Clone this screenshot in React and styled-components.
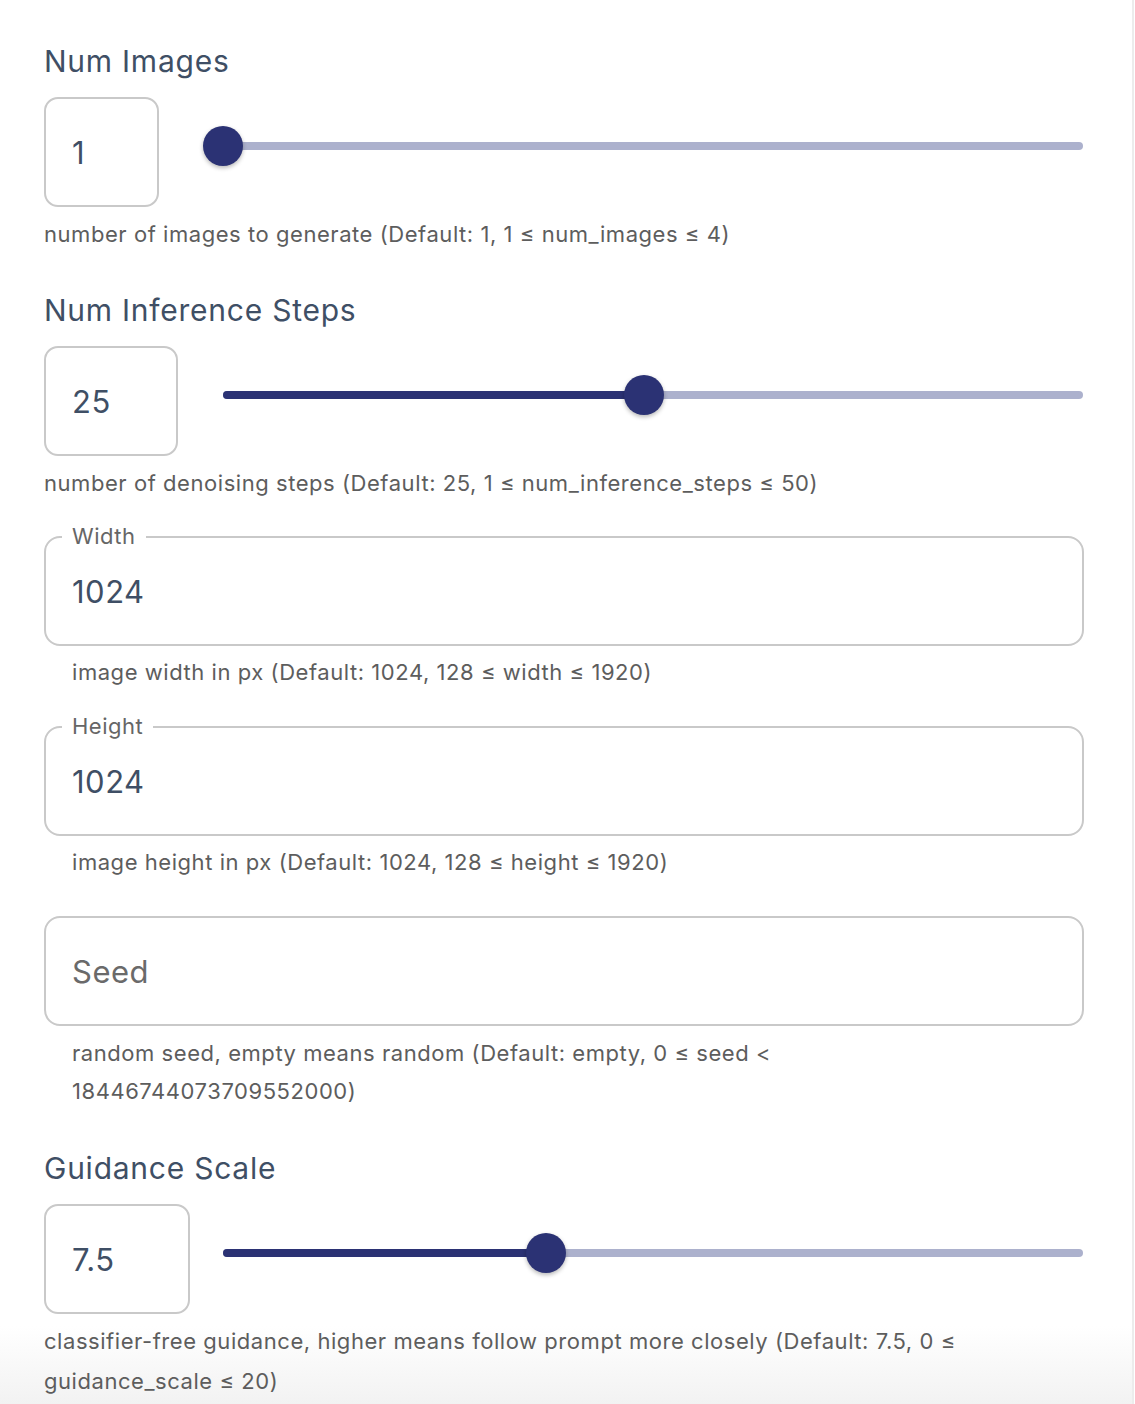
import React from 'react';
import styled, { createGlobalStyle } from 'styled-components';

const GlobalStyle = createGlobalStyle`
  html, body {
    margin: 0;
    padding: 0;
    background: #ffffff;
  }
  body {
    font-family: Inter, "Noto Sans", "Liberation Sans", sans-serif;
  }
`;

const Panel = styled.div`
  width: 1134px;
  height: 1404px;
  overflow: hidden;
  box-sizing: border-box;
  border-right: 2px solid #ececec;
  padding: 43px 0 0 44px;
  background: linear-gradient(to bottom, #ffffff 0, #ffffff 1326px, #f2f2f2 1404px);
`;

const Column = styled.div`
  width: 1040px;
`;

const Section = styled.section`
  margin-top: ${p => p.$gap || 0}px;
`;

const Title = styled.h2`
  margin: 0 0 18px 0;
  font-size: 30px;
  line-height: 36px;
  font-weight: 400;
  color: #3f4f65;
  letter-spacing: 0.75px;
`;

const Row = styled.div`
  display: grid;
  grid-template-columns: 179px 1fr;
  align-items: start;
  height: 110px;
  padding-right: 1px;
`;

const NumberBox = styled.input`
  box-sizing: border-box;
  width: ${p => p.$w}px;
  height: 110px;
  border: 2px solid #c9c9c9;
  border-radius: 14px;
  padding: 0 0 0 26px;
  font-family: inherit;
  font-size: 31px;
  letter-spacing: 0.5px;
  color: #3f4f65;
  background: #fff;
  outline: none;
`;

const Track = styled.div`
  position: relative;
  margin-top: 45px;
  height: 8px;
  border-radius: 4px;
  background: #acb1cd;
`;

const Fill = styled.div`
  position: absolute;
  left: 0;
  top: 0;
  bottom: 0;
  border-radius: 4px;
  background: #2b3274;
`;

const Thumb = styled.div`
  position: absolute;
  top: 50%;
  width: 40px;
  height: 40px;
  margin: -20px 0 0 -20px;
  border-radius: 50%;
  background: #2b3274;
  box-shadow: 0 2px 4px rgba(0, 0, 0, 0.28);
`;

const Helper = styled.p`
  margin: ${p => p.$top || 8}px 0 0 ${p => p.$indent || 0}px;
  font-size: 22px;
  line-height: ${p => p.$lh || 38}px;
  color: #5d5d5d;
  letter-spacing: 0.55px;
`;

const Field = styled.div`
  position: relative;
  box-sizing: border-box;
  height: 110px;
  margin-top: ${p => p.$gap || 0}px;
  border: 2px solid #c9c9c9;
  border-radius: 16px;
  display: flex;
  align-items: center;
`;

const FloatLabel = styled.span`
  position: absolute;
  top: -15px;
  left: 16px;
  padding: 0 10px;
  background: #fff;
  font-size: 22px;
  line-height: 26px;
  letter-spacing: 0.5px;
  color: #666666;
`;

const FieldInput = styled.input`
  width: 100%;
  border: none;
  outline: none;
  background: transparent;
  padding: 0 0 0 26px;
  font-family: inherit;
  font-size: 31px;
  letter-spacing: 0.5px;
  color: #3f4f65;
  &::placeholder {
    color: #6a6a6a;
  }
`;

function Slider({ min, max, value }) {
  const pct = ((value - min) / (max - min)) * 100;
  return (
    <Track>
      <Fill style={{ width: `${pct}%` }} />
      <Thumb style={{ left: `${pct}%` }} />
    </Track>
  );
}

function SliderField({ title, value, min, max, boxWidth, children, gap }) {
  return (
    <Section $gap={gap}>
      <Title>{title}</Title>
      <Row>
        <NumberBox $w={boxWidth} defaultValue={value} readOnly />
        <Slider min={min} max={max} value={Number(value)} />
      </Row>
      {children}
    </Section>
  );
}

function TextField({ label, value, placeholder, gap, children }) {
  return (
    <>
      <Field $gap={gap}>
        {label && <FloatLabel>{label}</FloatLabel>}
        <FieldInput defaultValue={value} placeholder={placeholder} readOnly />
      </Field>
      {children}
    </>
  );
}

export default function App() {
  return (
    <>
      <GlobalStyle />
      <Panel>
        <Column>
          <SliderField title="Num Images" value="1" min={1} max={4} boxWidth={115}>
            <Helper>number of images to generate (Default: 1, 1 ≤ num_images ≤ 4)</Helper>
          </SliderField>

          <SliderField title="Num Inference Steps" value="25" min={1} max={50} boxWidth={134} gap={39}>
            <Helper>number of denoising steps (Default: 25, 1 ≤ num_inference_steps ≤ 50)</Helper>
          </SliderField>

          <TextField label="Width" value="1024" gap={34}>
            <Helper $top={7} $indent={28}>image width in px (Default: 1024, 128 ≤ width ≤ 1920)</Helper>
          </TextField>

          <TextField label="Height" value="1024" gap={35}>
            <Helper $top={7} $indent={28}>image height in px (Default: 1024, 128 ≤ height ≤ 1920)</Helper>
          </TextField>

          <TextField placeholder="Seed" gap={35}>
            <Helper $top={8} $indent={28}>
              random seed, empty means random (Default: empty, 0 ≤ seed &lt;
              <br />
              18446744073709552000)
            </Helper>
          </TextField>

          <SliderField title="Guidance Scale" value="7.5" min={0} max={20} boxWidth={146} gap={40}>
            <Helper $lh={40} $top={7}>
              classifier-free guidance, higher means follow prompt more closely (Default: 7.5, 0 ≤
              <br />
              guidance_scale ≤ 20)
            </Helper>
          </SliderField>
        </Column>
      </Panel>
    </>
  );
}
